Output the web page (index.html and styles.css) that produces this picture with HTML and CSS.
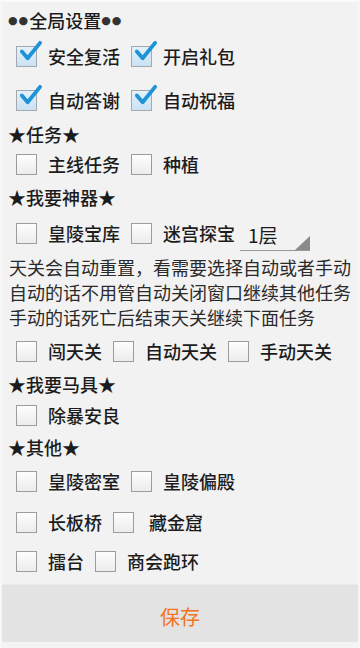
FILE: index.html
```html
<!DOCTYPE html>
<html lang="zh">
<head>
    <meta charset="UTF-8">
    <meta name="viewport" content="width=device-width, initial-scale=1.0">
    <title>设置</title>
    <link rel="stylesheet" href="styles.css">
</head>
<body>
    <div class="panel">
        <div class="title first"><span class="dot">●●</span>全局设置<span class="dot">●●</span></div>

        <div class="row r44">
            <span class="cb on"><svg viewBox="0 0 26 26"><path d="M4 12 L10 19 L23 3" /></svg></span>
            <span class="label">安全复活</span>
            <span class="cb on"><svg viewBox="0 0 26 26"><path d="M4 12 L10 19 L23 3" /></svg></span>
            <span class="label">开启礼包</span>
        </div>
        <div class="row r44">
            <span class="cb on"><svg viewBox="0 0 26 26"><path d="M4 12 L10 19 L23 3" /></svg></span>
            <span class="label">自动答谢</span>
            <span class="cb on"><svg viewBox="0 0 26 26"><path d="M4 12 L10 19 L23 3" /></svg></span>
            <span class="label">自动祝福</span>
        </div>

        <div class="title h24">★任务★</div>
        <div class="row r36">
            <span class="cb"></span>
            <span class="label">主线任务</span>
            <span class="cb"></span>
            <span class="label">种植</span>
        </div>

        <div class="title h30">★我要神器★</div>
        <div class="row r42">
            <span class="cb"></span>
            <span class="label">皇陵宝库</span>
            <span class="cb"></span>
            <span class="label">迷宫探宝</span>
            <span class="spinner">1层</span>
        </div>

        <p class="note">天关会自动重置，看需要选择自动或者手动<br>自动的话不用管自动关闭窗口继续其他任务<br>手动的话死亡后结束天关继续下面任务</p>

        <div class="row r42">
            <span class="cb"></span>
            <span class="label">闯天关</span>
            <span class="cb"></span>
            <span class="label">自动天关</span>
            <span class="cb"></span>
            <span class="label">手动天关</span>
        </div>

        <div class="title h24">★我要马具★</div>
        <div class="row r38">
            <span class="cb"></span>
            <span class="label">除暴安良</span>
        </div>

        <div class="title h26">★其他★</div>
        <div class="row r42">
            <span class="cb"></span>
            <span class="label">皇陵密室</span>
            <span class="cb"></span>
            <span class="label">皇陵偏殿</span>
        </div>
        <div class="row r40">
            <span class="cb"></span>
            <span class="label">长板桥</span>
            <span class="cb"></span>
            <span class="label wide">藏金窟</span>
        </div>
        <div class="row r38">
            <span class="cb"></span>
            <span class="label">擂台</span>
            <span class="cb"></span>
            <span class="label">商会跑环</span>
        </div>
    </div>

    <div class="save-bar">
        <button class="save">保存</button>
    </div>
</body>
</html>
```

FILE: styles.css
```css
body {
    margin: 0;
    padding: 0;
    width: 360px;
    height: 648px;
    overflow: hidden;
    background-color: #f2f2f2;
    color: #1c1c1c;
    font-family: "Noto Sans CJK SC", "Noto Sans", sans-serif;
    font-size: 18px;
    font-weight: 500;
    display: flex;
    flex-direction: column;
    box-sizing: border-box;
    border-top: 2px solid #fbfbfb;
    border-left: 2px solid #f7f7f7;
    border-right: 2px solid #f7f7f7;
}

.panel {
    flex: 1;
    padding: 0 0 0 6px;
}

.title {
    display: flex;
    align-items: center;
    line-height: 1;
}

.title.first {
    height: 28px;
    padding-top: 4px;
}

.dot {
    font-family: "DejaVu Sans", sans-serif;
    font-size: 11px;
    letter-spacing: 1px;
    color: #333;
}

.h24 { height: 24px; }
.h26 { height: 26px; }
.h30 { height: 30px; }

.row {
    display: flex;
    align-items: center;
    padding-left: 8px;
}

.r36 { height: 36px; }
.r38 { height: 38px; }
.r40 { height: 40px; }
.r42 { height: 42px; }
.r44 { height: 44px; }

.cb {
    position: relative;
    width: 21px;
    height: 21px;
    box-sizing: border-box;
    border: 1px solid #9c9c9c;
    background: linear-gradient(#fdfdfd, #ececec);
    flex-shrink: 0;
}

.cb.on {
    background: linear-gradient(#e4f1fa, #c9e2f3);
    border-color: #a3a9ae;
}

.cb svg {
    position: absolute;
    left: 1px;
    top: -7px;
    width: 25px;
    height: 25px;
    overflow: visible;
}

.cb svg path {
    fill: none;
    stroke: #1f93d8;
    stroke-width: 4;
    stroke-linecap: round;
    stroke-linejoin: round;
}

.label {
    margin: 0 11px 0 11px;
    line-height: 1;
    white-space: nowrap;
}

.label.wide {
    margin-left: 15px;
}

.spinner {
    position: relative;
    width: 62px;
    height: 30px;
    margin-left: -6px;
    padding-left: 8px;
    display: flex;
    align-items: center;
    border-bottom: 1px solid #999;
    font-size: 19px;
    font-weight: 400;
    margin-top: 4px;
}

.spinner::after {
    content: "";
    position: absolute;
    right: 0;
    bottom: 0;
    width: 0;
    height: 0;
    border-left: 15px solid transparent;
    border-bottom: 14px solid #8a8a8a;
}

.note {
    margin: 0;
    padding: 1px 0 0 1px;
    line-height: 25px;
    white-space: nowrap;
    color: #2a2a2a;
    font-weight: 400;
}

.save-bar {
    height: 61px;
    padding-bottom: 3px;
    background-color: #f4f4f4;
}

.save {
    width: 100%;
    height: 58px;
    border: none;
    border-top: 1px solid #ebebeb;
    background-color: #e3e3e3;
    color: #f37321;
    font-family: "Noto Sans CJK SC", sans-serif;
    font-size: 20px;
    padding: 6px 0 0;
}
```
